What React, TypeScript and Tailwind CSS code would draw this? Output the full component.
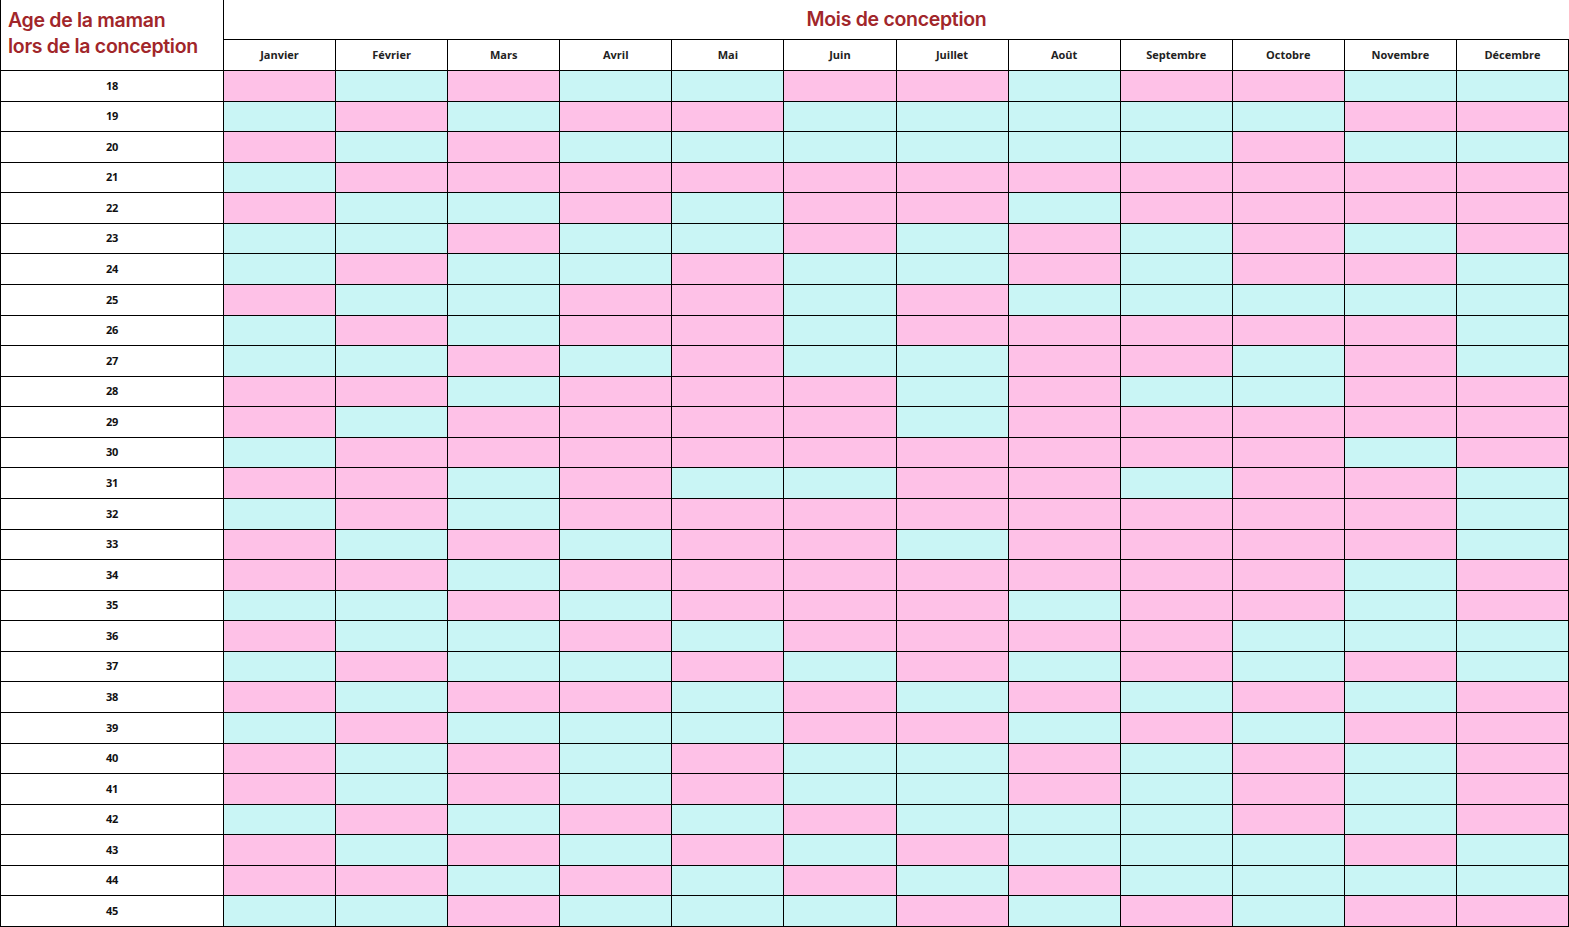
import React from 'react';

const months = ['Janvier', 'Février', 'Mars', 'Avril', 'Mai', 'Juin', 'Juillet', 'Août', 'Septembre', 'Octobre', 'Novembre', 'Décembre'];

// P = fille (rose), B = garçon (bleu), de janvier à décembre
const chart: Record<number, string> = {
    18: 'PBPBBPPBPPBB',
    19: 'BPBPPBBBBBPP',
    20: 'PBPBBBBBBPBB',
    21: 'BPPPPPPPPPPP',
    22: 'PBBPBPPBPPPP',
    23: 'BBPBBPBPBPBP',
    24: 'BPBBPBBPBPPB',
    25: 'PBBPPBPBBBBB',
    26: 'BPBPPBPPPPPB',
    27: 'BBPBPBBPPBPB',
    28: 'PPBPPPBPBBPP',
    29: 'PBPPPPBPPPPP',
    30: 'BPPPPPPPPPBP',
    31: 'PPBPBBPPBPPB',
    32: 'BPBPPPPPPPPB',
    33: 'PBPBPPBPPPPB',
    34: 'PPBPPPPPPPBP',
    35: 'BBPBPPPBPPBP',
    36: 'PBBPBPPPPBBB',
    37: 'BPBBPBPBPBPB',
    38: 'PBPPBPBPBPBP',
    39: 'BPBBBPPBPBPP',
    40: 'PBPBPBBPBPBP',
    41: 'PBPBPBBPBPBP',
    42: 'BPBPBPBBBPBP',
    43: 'PBPBPBPBBBPB',
    44: 'PPBPBPBPBBBB',
    45: 'BBPBBBPBPBPP',
};

const ages = Object.keys(chart).map(Number);

const App = () => {
    return (
        <div className="w-[1569px] h-[927px] bg-white overflow-hidden font-['Open_Sans',sans-serif]">
            <div className="grid grid-cols-[224px_repeat(12,1fr)] grid-rows-[40px_31px_repeat(28,1fr)] h-[927px] w-[1569px]">
                {/* Header */}
                <div className="row-span-2 border-l border-r border-b border-black px-[7px] pt-[7px]">
                    <h1 className="font-['Inter',sans-serif] font-semibold text-[19.5px] leading-[26px] tracking-[-0.3px] text-[#a1262a]">
                        Age de la maman<br />lors de la conception
                    </h1>
                </div>
                <div className="col-span-12 border-b border-black flex items-center justify-center">
                    <h2 className="font-['Inter',sans-serif] font-semibold text-[19.5px] tracking-[-0.3px] text-[#a1262a]">Mois de conception</h2>
                </div>
                {months.map(m => (
                    <div key={m} className="border-r border-b border-black flex items-center justify-center text-[11px] font-bold text-[#222]">
                        {m}
                    </div>
                ))}

                {/* Rows */}
                {ages.map(age => (
                    <React.Fragment key={age}>
                        <div className="border-l border-r border-b border-black flex items-center justify-center text-[11px] font-bold text-[#111] tracking-[-0.3px]">
                            {age}
                        </div>
                        {chart[age].split('').map((c, i) => (
                            <div
                                key={i}
                                className={`border-r border-b border-black ${c === 'P' ? 'bg-[#fec1e7]' : 'bg-[#c9f5f5]'}`}
                            />
                        ))}
                    </React.Fragment>
                ))}
            </div>
        </div>
    );
};

export default App;
